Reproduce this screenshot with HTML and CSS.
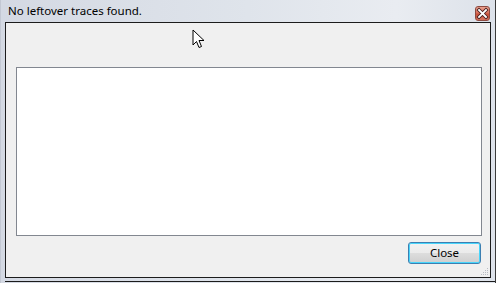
FILE: index.html
```html
<!DOCTYPE html>
<html>
<head>
<meta charset="utf-8">
<link rel="stylesheet" href="styles.css">
</head>
<body>
<div class="window">
  <div class="titlebar">
    <span class="title">No leftover traces found.</span>
    <div class="close-x">
      <svg width="15" height="15" viewBox="0 0 15 15">
        <path d="M4 4 L11 11 M11 4 L4 11" stroke="#4a2020" stroke-width="3.6" stroke-linecap="square"/>
        <path d="M4 4 L11 11 M11 4 L4 11" stroke="#ffffff" stroke-width="1.8" stroke-linecap="square"/>
      </svg>
    </div>
  </div>
  <div class="client">
    <div class="listbox"></div>
    <div class="buttons">
      <button class="btn">Close</button>
    </div>
    <svg class="grip" width="10" height="10" viewBox="0 0 10 10">
      <g fill="#b8bcc4">
        <rect x="8" y="2" width="1" height="1"/>
        <rect x="6" y="4" width="1" height="1"/><rect x="8" y="4" width="1" height="1"/>
        <rect x="4" y="6" width="1" height="1"/><rect x="6" y="6" width="1" height="1"/><rect x="8" y="6" width="1" height="1"/>
        <rect x="2" y="8" width="1" height="1"/><rect x="4" y="8" width="1" height="1"/><rect x="6" y="8" width="1" height="1"/><rect x="8" y="8" width="1" height="1"/>
      </g>
    </svg>
  </div>
  <svg class="cursor" width="14" height="22" viewBox="0 0 14 22">
    <path d="M1 1 L1 16 L4.5 12.5 L7 18.5 L9.5 17.5 L7 11.5 L12 11.5 Z" fill="#ffffff" stroke="#000000" stroke-width="1" stroke-linejoin="miter"/>
  </svg>
</div>
</body>
</html>
```

FILE: styles.css
```css
html, body {
  margin: 0;
  padding: 0;
  background: #ffffff;
}

.window {
  position: relative;
  width: 496px;
  height: 283px;
  box-sizing: border-box;
  background: linear-gradient(to right, #d4d9e3 0%, #dfe4eb 50%, #e9ecf1 80%, #dde2ea 100%);
  border-left: 1px solid #c3c8d3;
  border-right: 1px solid #3a3a3a;
  display: flex;
  flex-direction: column;
  padding: 0 4px 0 4px;
}

.titlebar {
  height: 22px;
  display: flex;
  align-items: flex-start;
  justify-content: space-between;
  flex: none;
}

.title {
  font-family: "Noto Sans", "DejaVu Sans", sans-serif;
  font-size: 11.5px;
  color: #000;
  margin: 3px 0 0 3px;
  line-height: 15px;
}

.close-x {
  width: 15px;
  height: 15px;
  margin: 6px 1px 0 0;
  box-sizing: border-box;
  border: 1px solid #8e4a40;
  border-radius: 3px;
  background: linear-gradient(to bottom, #eaa08f 0%, #d9705c 45%, #c7503a 55%, #d8735e 100%);
  display: flex;
}

.close-x svg {
  margin: -1px;
}

.client {
  position: relative;
  height: 256px;
  flex: none;
  box-sizing: border-box;
  border: 1px solid #1c1c1c;
  background: #f0f0f0;
  padding: 44px 8px 0 10px;
  display: flex;
  flex-direction: column;
}

.listbox {
  height: 169px;
  box-sizing: border-box;
  border: 1px solid #828790;
  background: #ffffff;
}

.buttons {
  display: flex;
  justify-content: flex-end;
  margin-top: 6px;
  padding-right: 1px;
}

.btn {
  width: 73px;
  height: 22px;
  box-sizing: border-box;
  border: 1px solid #3c7fb1;
  border-radius: 3px;
  box-shadow: inset 0 0 0 1px #48d5fb;
  background: linear-gradient(to bottom, #eaf6fd 0%, #d9f0fc 50%, #bee6fd 51%, #a7d9f5 100%);
  background: linear-gradient(to bottom, #f2f2f2 0%, #ebebeb 50%, #dddddd 51%, #cfcfcf 100%);
  font-family: "Noto Sans", "DejaVu Sans", sans-serif;
  font-size: 11.5px;
  color: #000;
  padding: 0;
  line-height: 18px;
}

.grip {
  position: absolute;
  right: 1px;
  bottom: 1px;
}

.cursor {
  position: absolute;
  left: 191px;
  top: 29px;
}

.window::after {
  content: "";
  position: absolute;
  left: 4px;
  right: 0;
  bottom: 1px;
  height: 1px;
  background: #1c1c1c;
}
```
